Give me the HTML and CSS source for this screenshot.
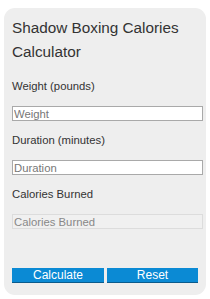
FILE: index.html
```html
<!DOCTYPE html>
<html lang="en">
<head>
    <meta charset="UTF-8">
    <meta name="viewport" content="width=device-width, initial-scale=1.0">
    <title>Shadow Boxing Calories Calculator</title>
    <link rel="stylesheet" href="styles.css">
</head>
<body>
    <div class="calculator">
        <h1>Shadow Boxing Calories Calculator</h1>
        <div class="field">
            <label for="weight">Weight (pounds)</label>
            <input type="text" id="weight" placeholder="Weight">
        </div>
        <div class="field">
            <label for="duration">Duration (minutes)</label>
            <input type="text" id="duration" placeholder="Duration">
        </div>
        <div class="field">
            <label for="calories">Calories Burned</label>
            <input type="text" id="calories" class="result" placeholder="Calories Burned" disabled>
        </div>
        <div class="buttons">
            <button class="calc" onclick="calculate()">Calculate</button>
            <button class="reset" onclick="resetForm()">Reset</button>
        </div>
    </div>

    <script>
        function calculate() {
            let weight = parseFloat(document.getElementById('weight').value);
            let minutes = parseFloat(document.getElementById('duration').value);
            if (isNaN(weight) || isNaN(minutes)) {
                document.getElementById('calories').value = '';
                return;
            }
            // MET of about 7.8 for shadow boxing
            let kg = weight * 0.453592;
            let burned = 7.8 * 3.5 * kg / 200 * minutes;
            document.getElementById('calories').value = burned.toFixed(1);
        }
        function resetForm() {
            document.getElementById('weight').value = '';
            document.getElementById('duration').value = '';
            document.getElementById('calories').value = '';
        }
    </script>
</body>
</html>
```

FILE: styles.css
```css
body {
    margin: 0;
    font-family: 'Liberation Sans', Arial, sans-serif;
    background: #fff;
}
.calculator {
    width: 186px;
    height: 273px;
    margin: 8px 0 0 4px;
    padding: 8px 8px 6px 8px;
    background: #eeeeee;
    border-radius: 11px;
}
h1 {
    margin: 0;
    font-size: 15.3px;
    line-height: 23.5px;
    font-weight: normal;
    color: #333;
}
.field {
    margin-top: 17px;
}
.field + .field {
    margin-top: 13px;
}
label {
    display: block;
    font-size: 11.3px;
    line-height: 13px;
    color: #333;
}
input[type="text"] {
    display: block;
    width: 100%;
    height: 13px;
    margin-top: 13px;
    padding: 0 2px 0 1px;
    border: 1px solid #a9a9a9;
    background: #fff;
    font-family: 'Liberation Sans', Arial, sans-serif;
    font-size: 11.3px;
    color: #333;
    outline: none;
}
input::placeholder {
    color: #777;
}
input.result {
    border-color: #dcdcdc;
    background: #f0f0f0;
}
input.result::placeholder {
    color: #888;
}
.buttons {
    display: flex;
    gap: 3px;
    margin-top: 39px;
}
button {
    box-sizing: border-box;
    width: 93px;
    height: 15px;
    padding: 0;
    border: none;
    border-bottom: 1px solid #0a5b8c;
    background: #0b8ad4;
    color: #fff;
    font-family: 'Liberation Sans', Arial, sans-serif;
    font-size: 12px;
    line-height: 14px;
    cursor: pointer;
}
button.reset {
    width: 92px;
}
button:hover {
    background: #0977b8;
}
```
